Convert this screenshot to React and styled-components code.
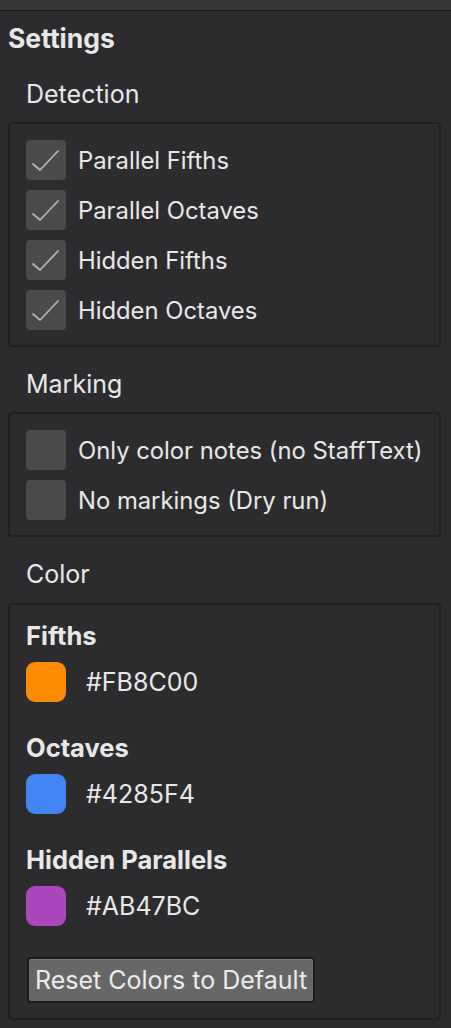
import React from "react";
import styled, { createGlobalStyle } from "styled-components";

const Global = createGlobalStyle`
  html, body { margin: 0; padding: 0; background: #2c2c2f; }
  body { font-family: Inter, "Noto Sans", sans-serif; color: #e8e8e8; }
`;

const Page = styled.div`
  width: 451px;
  min-height: 1028px;
  background: #2c2c2f;
  display: flex;
  flex-direction: column;
`;

const TopBand = styled.div`
  height: 10px;
  background: #363636;
  border-bottom: 1px solid #161616;
`;

const Content = styled.div`
  padding: 11px 10px 0 8px;
  display: flex;
  flex-direction: column;
`;

const Title = styled.div`
  font-size: 26.5px;
  font-weight: 700;
  line-height: 32px;
`;

const SectionLabel = styled.div`
  font-size: 25px;
  line-height: 30px;
  padding-left: 18px;
  margin-top: ${(p) => p.$mt}px;
  margin-bottom: ${(p) => p.$mb}px;
`;

const Box = styled.div`
  border: 2px solid #212123;
  border-radius: 4px;
  padding: 16px 16px 15px;
  display: flex;
  flex-direction: column;
  gap: 10px;
`;

const ColorBox = styled(Box)`
  gap: 31px;
`;

const Row = styled.label`
  display: flex;
  align-items: center;
  gap: 12px;
  font-size: 23.8px;
  height: 40px;
  white-space: nowrap;
`;

const Check = styled.span`
  width: 40px;
  height: 40px;
  border-radius: 4px;
  background: #4a4a4a;
  display: flex;
  flex-shrink: 0;
`;

const Group = styled.div`
  display: flex;
  flex-direction: column;
  gap: 11px;
`;

const GroupTitle = styled.div`
  font-size: 25.5px;
  font-weight: 700;
  line-height: 30px;
`;

const SwatchRow = styled.div`
  display: flex;
  align-items: center;
  gap: 20px;
  font-size: 25px;
`;

const Swatch = styled.span`
  width: 40px;
  height: 40px;
  border-radius: 9px;
  background: ${(p) => p.$color};
  flex-shrink: 0;
`;

const ResetButton = styled.button`
  align-self: flex-start;
  margin-left: 1px;
  height: 46px;
  padding: 0 6px;
  background: #676767;
  border: 2px solid #1c1c1c;
  border-radius: 4px;
  color: #ececec;
  font-family: Inter, "Noto Sans", sans-serif;
  font-size: 25px;
  white-space: nowrap;
  box-shadow: inset 0 1px 0 #7a7a7a;
`;

const CheckIcon = () => (
  <svg width="40" height="40" viewBox="0 0 40 40">
    <polyline
      points="7,24 14,30 32,11"
      fill="none"
      stroke="#b4b4b4"
      strokeWidth="1.8"
      strokeLinecap="round"
      strokeLinejoin="round"
    />
  </svg>
);

const CheckRow = ({ label, checked }) => (
  <Row>
    <Check>{checked && <CheckIcon />}</Check>
    {label}
  </Row>
);

const colors = [
  { name: "Fifths", hex: "#FB8C00" },
  { name: "Octaves", hex: "#4285F4" },
  { name: "Hidden Parallels", hex: "#AB47BC" },
];

export default function App() {
  return (
    <Page>
      <Global />
      <TopBand />
      <Content>
        <Title>Settings</Title>
        <SectionLabel $mt={25} $mb={13}>Detection</SectionLabel>
        <Box>
          <CheckRow label="Parallel Fifths" checked />
          <CheckRow label="Parallel Octaves" checked />
          <CheckRow label="Hidden Fifths" checked />
          <CheckRow label="Hidden Octaves" checked />
        </Box>
        <SectionLabel $mt={22} $mb={13}>Marking</SectionLabel>
        <Box>
          <CheckRow label="Only color notes (no StaffText)" />
          <CheckRow label="No markings (Dry run)" />
        </Box>
        <SectionLabel $mt={22} $mb={14}>Color</SectionLabel>
        <ColorBox>
          {colors.map((c) => (
            <Group key={c.name}>
              <GroupTitle>{c.name}</GroupTitle>
              <SwatchRow>
                <Swatch $color={c.hex} />
                {c.hex}
              </SwatchRow>
            </Group>
          ))}
          <ResetButton>Reset Colors to Default</ResetButton>
        </ColorBox>
      </Content>
    </Page>
  );
}
